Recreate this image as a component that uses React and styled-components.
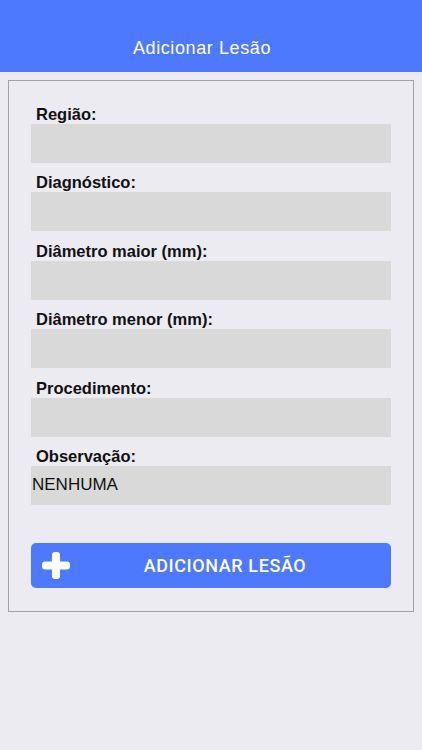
import styled, { createGlobalStyle } from "styled-components";

const GlobalStyle = createGlobalStyle`
    html, body {
        margin: 0;
        padding: 0;
        background: #ebebf1;
        font-family: "Liberation Sans", Arial, sans-serif;
    }
`;

const fields = [
    { label: "Região:", value: "" },
    { label: "Diagnóstico:", value: "" },
    { label: "Diâmetro maior (mm):", value: "" },
    { label: "Diâmetro menor (mm):", value: "" },
    { label: "Procedimento:", value: "" },
    { label: "Observação:", value: "NENHUMA" },
];

const App = () => {
    return (
        <StyledPage>
            <GlobalStyle />
            <StyledHeader>
                <h1>Adicionar Lesão</h1>
            </StyledHeader>
            <StyledPanel>
                {fields.map((field) => (
                    <Field label={field.label} value={field.value} key={field.label} />
                ))}
                <StyledButton>
                    <PlusIcon />
                    <span>ADICIONAR LESÃO</span>
                </StyledButton>
            </StyledPanel>
        </StyledPage>
    );
};

const Field = ({ label, value }) => {
    return (
        <StyledField>
            <label>{label}</label>
            <StyledInput>{value}</StyledInput>
        </StyledField>
    );
};

const PlusIcon = () => (
    <svg width="28" height="27" viewBox="0 0 28 27">
        <rect x="10" y="0" width="8" height="27" rx="3" fill="#fff" />
        <rect x="0" y="9.5" width="28" height="8" rx="3" fill="#fff" />
    </svg>
);

const StyledPage = styled.div`
    min-height: 750px;
    background: #ebebf1;
`;

const StyledHeader = styled.div`
    height: 72px;
    background: #4d79ff;
    padding-top: 25px;
    box-sizing: border-box;
    display: flex;
    align-items: center;
    justify-content: center;
    h1 {
        margin: 0 18px 0 0;
        color: #fff;
        font-size: 18px;
        letter-spacing: 0.6px;
        font-weight: 400;
    }
`;

const StyledPanel = styled.div`
    margin: 8px 8px 0 8px;
    border: 1.5px solid #a3a3a6;
    padding: 23px 22px 23px 22px;
    display: flex;
    flex-direction: column;
`;

const StyledField = styled.div`
    display: flex;
    flex-direction: column;
    margin-bottom: 9.4px;
    label {
        height: 20px;
        line-height: 20px;
        padding-left: 5px;
        font-size: 16.5px;
        font-weight: 700;
        color: #111;
    }
`;

const StyledInput = styled.div`
    height: 39px;
    background: #d9d9d9;
    display: flex;
    align-items: center;
    padding-left: 1px;
    font-size: 17px;
    color: #111;
`;

const StyledButton = styled.div`
    margin-top: 29px;
    height: 45px;
    background: #4d79ff;
    border-radius: 5px;
    display: flex;
    align-items: center;
    padding-left: 11px;
    svg {
        flex-shrink: 0;
    }
    span {
        flex: 1;
        text-align: center;
        margin-right: 11px;
        color: #fff;
        font-family: Roboto, "Liberation Sans", sans-serif;
        font-size: 18px;
        letter-spacing: 0.6px;
        font-weight: 500;
    }
`;

export default App;
